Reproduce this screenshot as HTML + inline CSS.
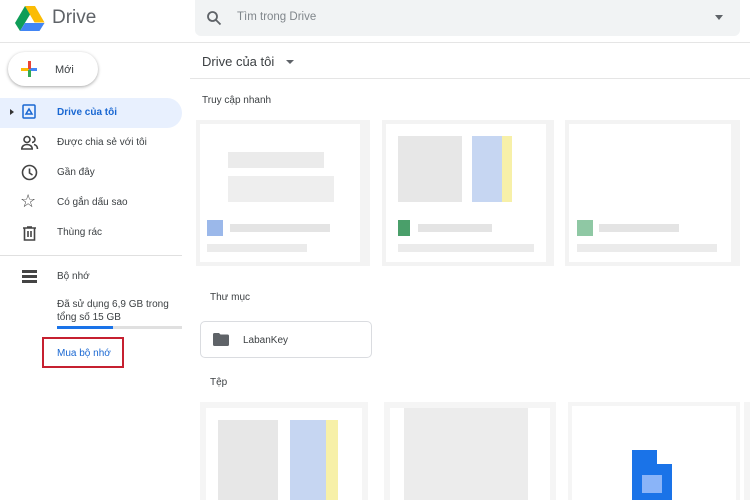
<!DOCTYPE html><html><head><style>
body{margin:0;width:750px;height:500px;overflow:hidden;background:#fff;font-family:"Liberation Sans",Arial,sans-serif;color:#3c4043;position:relative}
.a{position:absolute}
.t{font-size:10.5px}
.g{background:#ddd}
</style></head><body>
<svg class="a" style="left:15px;top:6px" width="30" height="26" viewBox="0 0 30 26"><polygon points="10,0 20,0 29.5,16.5 19.5,16.5" fill="#fbbc04"/><polygon points="10,0 15,8.5 5,25 0,17" fill="#0f9d58"/><polygon points="5,25 10,17 29.5,17 24.5,25" fill="#4285f4"/></svg>
<div class="a" style="left:52px;top:7px;font-size:19px;color:#5f6368">Drive</div>
<div class="a" style="left:195px;top:0;width:545px;height:36px;background:#f1f3f4;border-radius:0 0 6px 6px"></div>
<svg class="a" style="left:206px;top:10px" width="16" height="16" viewBox="0 0 16 16"><circle cx="6.5" cy="6.5" r="4.5" stroke="#5f6368" stroke-width="1.8" fill="none"/><line x1="10" y1="10" x2="14.5" y2="14.5" stroke="#5f6368" stroke-width="1.8"/></svg>
<div class="a t" style="left:237px;top:11px;font-size:11.5px;color:#80868b">Tìm trong Drive</div>
<div class="a" style="left:715px;top:15px;border:4px solid transparent;border-top:5px solid #5f6368"></div>
<div class="a" style="left:0;top:42px;width:750px;height:1px;background:#e5e5e5"></div>
<div class="a" style="left:8px;top:52px;width:90px;height:34px;border-radius:17px;box-shadow:0 1px 3px rgba(0,0,0,.35);background:#fff"></div>
<div class="a" style="left:21px;top:68px;width:8px;height:3px;background:#fbbc04"></div><div class="a" style="left:29px;top:68px;width:8px;height:3px;background:#4285f4"></div>
<div class="a" style="left:28px;top:61px;width:3px;height:8px;background:#ea4335"></div><div class="a" style="left:28px;top:70px;width:3px;height:7px;background:#34a853"></div>
<div class="a t" style="left:55px;top:64px;font-size:11px">Mới</div>
<div class="a" style="left:0;top:98px;width:182px;height:30px;background:#e8f0fe;border-radius:0 15px 15px 0"></div>
<div class="a" style="left:10px;top:109px;border:3px solid transparent;border-left:4px solid #333"></div>
<svg class="a" style="left:22px;top:104px" width="14" height="15" viewBox="0 0 14 15" fill="none" stroke="#1967d2" stroke-width="1.5"><rect x="1" y="1" width="12" height="13" rx="1"/><path d="M4 10h6l-3-5z"/></svg>
<div class="a t" style="left:57px;top:107px;color:#1967d2;font-weight:bold;font-size:10px">Drive của tôi</div>
<svg class="a" style="left:21px;top:135px" width="18" height="16" viewBox="0 0 18 16" fill="none" stroke="#444" stroke-width="1.6"><circle cx="6" cy="4.5" r="3"/><path d="M0.8 14c0-3 2.5-4.5 5.2-4.5s5.2 1.5 5.2 4.5z"/><path d="M11 1.5a3 3 0 0 1 0 6M13 9.5c2 .5 3.5 2 3.5 4.5"/></svg>
<div class="a t" style="left:57px;top:137px;font-size:10px">Được chia sẻ với tôi</div>
<svg class="a" style="left:21px;top:164px" width="17" height="17" viewBox="0 0 17 17" fill="none" stroke="#444" stroke-width="1.6"><circle cx="8.5" cy="8.5" r="7"/><path d="M8.5 4.5v4.5l3 2"/></svg>
<div class="a t" style="left:57px;top:167px;font-size:10px">Gần đây</div>
<div class="a" style="left:20px;top:191px;font-size:18px;color:#444">☆</div>
<div class="a t" style="left:57px;top:197px;font-size:10px">Có gắn dấu sao</div>
<svg class="a" style="left:23px;top:226px" width="13" height="15" viewBox="0 0 13 15" fill="none" stroke="#444" stroke-width="1.6"><path d="M0 2h13M4 1h5M1.5 2v12h10V2M5 5v6M8 5v6"/></svg>
<div class="a t" style="left:57px;top:227px;font-size:10px">Thùng rác</div>
<div class="a" style="left:0;top:255px;width:182px;height:1px;background:#e0e0e0"></div>
<svg class="a" style="left:22px;top:270px" width="15" height="13" viewBox="0 0 15 13" fill="#444"><rect y="0" width="15" height="3"/><rect y="5" width="15" height="3"/><rect y="10" width="15" height="3"/></svg>
<div class="a t" style="left:57px;top:271px;font-size:10px">Bộ nhớ</div>
<div class="a t" style="left:57px;top:298px;font-size:10px;line-height:13px">Đã sử dụng 6,9 GB trong<br>tổng số 15 GB</div>
<div class="a" style="left:57px;top:326px;width:125px;height:3px;background:#e0e0e0"></div>
<div class="a" style="left:57px;top:326px;width:56px;height:3px;background:#1a73e8"></div>
<div class="a" style="left:42px;top:337px;width:82px;height:31px;border:2px solid #c62030;box-sizing:border-box"></div>
<div class="a t" style="left:57px;top:348px;color:#1967d2;font-size:10px">Mua bộ nhớ</div>
<div class="a" style="left:202px;top:54px;font-size:13px;color:#3c4043">Drive của tôi</div>
<div class="a" style="left:286px;top:60px;border:4px solid transparent;border-top:4px solid #5f6368"></div>
<div class="a" style="left:190px;top:78px;width:560px;height:1px;background:#e5e5e5"></div>
<div class="a t" style="left:202px;top:95px;font-size:10px">Truy cập nhanh</div>
<div class="a" style="left:196px;top:120px;width:174px;height:146px;background:#f3f3f3"><div class="a" style="left:4px;top:4px;width:160px;height:88px;background:#fff"><div class="a g" style="left:28px;top:28px;width:96px;height:16px;opacity:.6"></div><div class="a g" style="left:28px;top:52px;width:106px;height:26px;opacity:.5"></div></div><div class="a" style="left:4px;top:92px;width:160px;height:50px;background:#fff"><div class="a" style="left:7px;top:8px;width:16px;height:16px;background:#9bb8ea"></div><div class="a g" style="left:30px;top:12px;width:100px;height:8px;opacity:.8"></div><div class="a g" style="left:7px;top:32px;width:100px;height:8px;opacity:.6"></div></div></div>
<div class="a" style="left:382px;top:120px;width:172px;height:146px;background:#f3f3f3"><div class="a" style="left:4px;top:4px;width:160px;height:88px;background:#fff"><div class="a g" style="left:12px;top:12px;width:64px;height:66px;opacity:.7"></div><div class="a" style="left:86px;top:12px;width:30px;height:66px;background:#c6d6f2"></div><div class="a" style="left:116px;top:12px;width:10px;height:66px;background:#f7f0a8"></div></div><div class="a" style="left:4px;top:92px;width:160px;height:50px;background:#fff"><div class="a" style="left:12px;top:8px;width:12px;height:16px;background:#4a9f6a"></div><div class="a g" style="left:32px;top:12px;width:74px;height:8px;opacity:.8"></div><div class="a g" style="left:12px;top:32px;width:136px;height:8px;opacity:.6"></div></div></div>
<div class="a" style="left:565px;top:120px;width:175px;height:146px;background:#f3f3f3"><div class="a" style="left:4px;top:4px;width:162px;height:88px;background:#fff"></div><div class="a" style="left:4px;top:92px;width:162px;height:50px;background:#fff"><div class="a" style="left:8px;top:8px;width:16px;height:16px;background:#8fc8a4"></div><div class="a g" style="left:30px;top:12px;width:80px;height:8px;opacity:.8"></div><div class="a g" style="left:8px;top:32px;width:140px;height:8px;opacity:.6"></div></div></div>
<div class="a t" style="left:210px;top:292px;font-size:10px">Thư mục</div>
<div class="a" style="left:200px;top:321px;width:172px;height:37px;border:1px solid #dadce0;border-radius:5px;box-sizing:border-box"></div>
<svg class="a" style="left:213px;top:333px" width="16" height="13" viewBox="0 0 16 13"><path d="M0 1.5Q0 0 1.5 0H6l1.5 1.5h7Q16 1.5 16 3v8.5Q16 13 14.5 13h-13Q0 13 0 11.5z" fill="#5f6368"/></svg>
<div class="a t" style="left:243px;top:335px;font-size:10px">LabanKey</div>
<div class="a t" style="left:210px;top:377px;font-size:10px">Tệp</div>
<div class="a" style="left:200px;top:402px;width:168px;height:98px;background:#f5f5f5"><div class="a" style="left:6px;top:6px;width:156px;height:92px;background:#fff"><div class="a g" style="left:12px;top:12px;width:60px;height:80px;opacity:.7"></div><div class="a" style="left:84px;top:12px;width:36px;height:80px;background:#c6d6f2"></div><div class="a" style="left:120px;top:12px;width:12px;height:80px;background:#f7f0a8"></div></div></div>
<div class="a" style="left:384px;top:402px;width:172px;height:98px;background:#f5f5f5"><div class="a" style="left:6px;top:6px;width:160px;height:92px;background:#fff"><div class="a g" style="left:14px;top:0;width:124px;height:92px;opacity:.55"></div></div></div>
<div class="a" style="left:568px;top:402px;width:172px;height:98px;background:#f5f5f5"><div class="a" style="left:4px;top:4px;width:164px;height:94px;background:#fff"></div></div>
<div class="a" style="left:632px;top:450px;width:40px;height:50px;background:#1a73e8"></div>
<div class="a" style="left:657px;top:450px;width:15px;height:14px;background:#fff"></div>
<div class="a" style="left:642px;top:475px;width:20px;height:18px;background:#8ab4f8"></div>
<div class="a" style="left:744px;top:402px;width:6px;height:98px;background:#f5f5f5"></div>
</body></html>
